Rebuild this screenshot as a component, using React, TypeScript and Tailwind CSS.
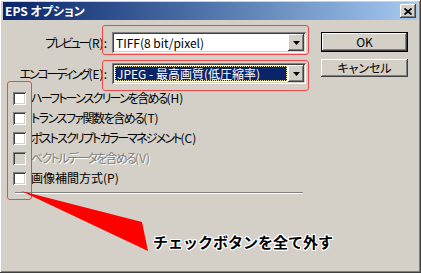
import React from "react";

const raised =
  "shadow-[inset_-1px_-1px_#404040,inset_1px_1px_#ffffff,inset_-2px_-2px_#808080,inset_2px_2px_#d4d0c8]";
const sunken =
  "shadow-[inset_1px_1px_#808080,inset_-1px_-1px_#ffffff,inset_2px_2px_#404040,inset_-2px_-2px_#d4d0c8]";

const DropArrow: React.FC = () => (
  <div className={`w-[16px] h-[17px] bg-[#d4d0c8] flex items-center justify-center ${raised}`}>
    <svg width="7" height="4" viewBox="0 0 7 4">
      <polygon points="0,0 7,0 3.5,4" fill="#000" />
    </svg>
  </div>
);

const Select: React.FC<{ value: string; selected?: boolean }> = ({ value, selected }) => (
  <div className={`w-[194px] h-[21px] bg-white flex items-center p-[2px] [font-feature-settings:normal] ${sunken}`}>
    <div className="flex-1 h-full flex items-center pl-[1px] pr-[1px] min-w-0">
      {selected ? (
        <div className="w-full h-[15px] bg-[#0a246a] text-white border border-dotted border-[#e8e0a0] flex items-center pl-[1px] whitespace-nowrap overflow-hidden">
          {value}
        </div>
      ) : (
        <span className="pl-[1px] whitespace-nowrap">{value}</span>
      )}
    </div>
    <DropArrow />
  </div>
);

const Check: React.FC<{ label: string; suffix: string; track: string; disabled?: boolean }> = ({
  label,
  suffix,
  track,
  disabled,
}) => (
  <div className="h-[20px] flex items-center pl-[10px] gap-[5px]">
    <div className={`w-[13px] h-[13px] ${disabled ? "bg-[#d4d0c8]" : "bg-white"} ${sunken}`} />
    <span
      className={`whitespace-nowrap ${
        disabled ? "text-[#808080] [text-shadow:1px_1px_0_#ffffff]" : "text-black"
      }`}
    >
      <span className={track}>{label}</span>
      {suffix}
    </span>
  </div>
);

const App: React.FC = () => {
  return (
    <div className="relative w-[421px] h-[273px] overflow-hidden bg-[#d4d0c8] font-['Noto_Sans_CJK_JP',sans-serif] text-[12px] leading-none text-black [font-feature-settings:'palt']">
      <div className={`w-full h-full pt-[2px] px-[3px] ${raised}`}>
        {/* title bar */}
        <div className="h-[18px] flex items-center justify-between bg-gradient-to-r from-[#0a246a] to-[#a6caf0] pl-[2px] pr-[2px]">
          <span className="text-white font-bold text-[12px]">EPS オプション</span>
          <div className={`w-[16px] h-[14px] bg-[#d4d0c8] flex items-center justify-center ${raised}`}>
            <svg width="8" height="7" viewBox="0 0 8 7">
              <path d="M0.5 0.5 L7.5 6.5 M7.5 0.5 L0.5 6.5" stroke="#000" strokeWidth="1.8" />
            </svg>
          </div>
        </div>

        <div className="flex mt-[12px]">
          {/* left side */}
          <div className="w-[303px] flex flex-col">
            <div className="flex items-center h-[21px]">
              <div className="w-[105px] text-right pr-[1px] whitespace-nowrap">
                <span className="tracking-[-2.4px]">プレビュー</span>(R):
              </div>
              <div className="ml-[4px]">
                <Select value="TIFF(8 bit/pixel)" />
              </div>
            </div>
            <div className="flex items-center h-[21px] mt-[10px]">
              <div className="w-[105px] text-right pr-[1px] whitespace-nowrap">
                <span className="tracking-[-2.2px]">エンコーディング</span>(E):
              </div>
              <div className="ml-[4px]">
                <Select value="JPEG - 最高画質(低圧縮率)" selected />
              </div>
            </div>
            <div className="flex flex-col mt-[4px]">
              <Check label="ハーフトーンスクリーンを含める" suffix="(H)" track="tracking-[-1.8px]" />
              <Check label="トランスファ関数を含める" suffix="(T)" track="tracking-[-1.5px]" />
              <Check label="ポストスクリプトカラーマネジメント" suffix="(C)" track="tracking-[-1.85px]" />
              <Check label="ベクトルデータを含める" suffix="(V)" track="tracking-[-1.7px]" disabled />
              <Check label="画像補間方式" suffix="(P)" track="tracking-normal" />
            </div>
            <div className="ml-[12px] mt-[4px] w-[288px] h-[2px] border-t border-[#808080] border-b border-b-white" />
          </div>

          {/* right side */}
          <div className="flex flex-col ml-[15px]">
            <div className="w-[87px] h-[20px] border border-black">
              <div className={`w-full h-full flex items-center justify-center ${raised}`}>OK</div>
            </div>
            <div className={`w-[87px] h-[18px] mt-[7px] flex items-center justify-center ${raised}`}>
              キャンセル
            </div>
          </div>
        </div>
      </div>

      {/* annotations */}
      <div className="absolute left-[102px] top-[25px] w-[207px] h-[30px] border border-[#f04848] rounded-[3px]" />
      <div className="absolute left-[102px] top-[60px] w-[207px] h-[31px] border border-[#f04848] rounded-[3px]" />
      <div className="absolute left-[7px] top-[81px] w-[25px] h-[119px] border border-[#f04848] rounded-[3px]" />
      <svg className="absolute left-0 top-0 pointer-events-none" width="421" height="273">
        <polygon points="21,191 142,222 148,251" fill="#ff0000" />
      </svg>
      <div className="absolute left-[153px] top-[234px] text-[15px] font-bold text-black [font-feature-settings:normal] [text-shadow:1px_1px_0_#fff,-1px_-1px_0_#fff,1px_-1px_0_#fff,-1px_1px_0_#fff,0_1px_0_#fff,0_-1px_0_#fff,1px_0_0_#fff,-1px_0_0_#fff]">
        チェックボタンを全て外す
      </div>
    </div>
  );
};

export default App;
